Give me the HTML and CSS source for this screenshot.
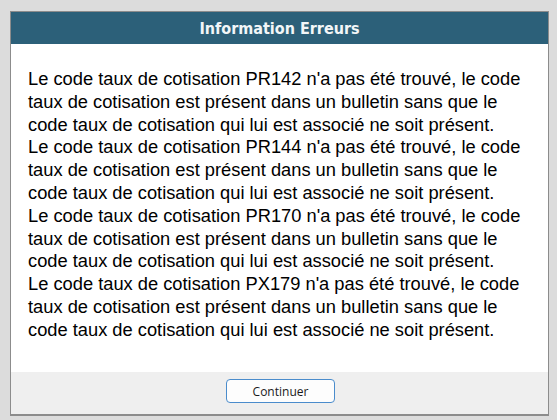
FILE: index.html
```html
<!DOCTYPE html>
<html lang="fr">
<head>
<meta charset="utf-8">
<title>Information Erreurs</title>
<link rel="stylesheet" href="styles.css">
</head>
<body>
<div class="dialog">
  <div class="title">Information Erreurs</div>
  <div class="content">
    <p>Le code taux de cotisation PR142 n'a pas été trouvé, le code taux de cotisation est présent dans un bulletin sans que le code taux de cotisation qui lui est associé ne soit présent.</p>
    <p>Le code taux de cotisation PR144 n'a pas été trouvé, le code taux de cotisation est présent dans un bulletin sans que le code taux de cotisation qui lui est associé ne soit présent.</p>
    <p>Le code taux de cotisation PR170 n'a pas été trouvé, le code taux de cotisation est présent dans un bulletin sans que le code taux de cotisation qui lui est associé ne soit présent.</p>
    <p>Le code taux de cotisation PX179 n'a pas été trouvé, le code taux de cotisation est présent dans un bulletin sans que le code taux de cotisation qui lui est associé ne soit présent.</p>
  </div>
  <div class="footer">
    <button class="btn" type="button">Continuer</button>
  </div>
</div>
</body>
</html>
```

FILE: styles.css
```css
html, body {
  margin: 0;
  padding: 0;
  background: #dcdcdc;
}
body {
  padding: 11px 8px 0 10px;
  height: 420px;
  box-sizing: border-box;
}
.dialog {
  width: 539px;
  box-sizing: border-box;
  border: 1px solid #8c8c8c;
  border-bottom: 2px solid #8c8c8c;
  background: #ffffff;
}
.title {
  height: 32px;
  background: #2c6079;
  color: #f2f6f8;
  font-family: "DejaVu Sans Condensed", "DejaVu Sans", sans-serif;
  font-weight: bold;
  font-size: 16px;
  display: flex;
  align-items: center;
  justify-content: center;
}
.content {
  height: 328px;
  box-sizing: border-box;
  padding: 24px 15px 0 17px;
  font-family: "Liberation Sans", Arial, sans-serif;
  font-size: 18.3px;
  line-height: 22.8px;
  color: #000;
}
.content p {
  margin: 0;
}
.footer {
  height: 42px;
  background: #efefef;
  display: flex;
  justify-content: center;
  align-items: flex-start;
  padding-top: 7px;
  box-sizing: border-box;
}
.btn {
  width: 109px;
  height: 24px;
  background: #fdfdfd;
  border: 1px solid #4a8ccc;
  border-radius: 4px;
  font-family: "Open Sans", "DejaVu Sans", sans-serif;
  font-size: 12px;
  color: #1a1a1a;
  padding: 0;
  margin-left: 2px;
}
```
